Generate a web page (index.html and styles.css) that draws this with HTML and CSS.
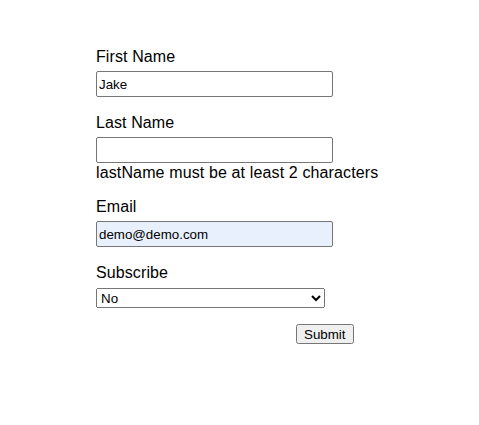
FILE: index.html
```html
<!DOCTYPE html>
<html lang="en">
<head>
    <meta charset="UTF-8">
    <meta name="viewport" content="width=device-width, initial-scale=1.0">
    <title>Signup Form</title>
    <link rel="stylesheet" href="styles.css">
</head>
<body>
    <div class="container">
        <form id="signup-form">
            <div class="form-group">
                <label for="firstName">First Name</label>
                <input type="text" id="firstName" value="Jake">
            </div>
            <div class="form-group">
                <label for="lastName">Last Name</label>
                <input type="text" id="lastName">
                <div class="error">lastName must be at least 2 characters</div>
            </div>
            <div class="form-group">
                <label for="email">Email</label>
                <input type="email" id="email" class="autofilled" value="demo@demo.com">
            </div>
            <div class="form-group">
                <label for="subscribe">Subscribe</label>
                <select id="subscribe">
                    <option value="no">No</option>
                    <option value="yes">Yes</option>
                </select>
            </div>
            <div class="actions">
                <button type="submit">Submit</button>
            </div>
        </form>
    </div>
</body>
</html>
```

FILE: styles.css
```css
body {
    font-family: "Liberation Sans", Arial, sans-serif;
    margin: 8px;
    background-color: #fff;
    color: #000;
}

.container {
    padding: 39px 0 0 88px;
}

.form-group {
    margin-bottom: 16px;
}

label {
    display: block;
    font-size: 16px;
    line-height: 17px;
    padding-top: 1px;
    letter-spacing: 0.1px;
}

input {
    display: block;
    box-sizing: border-box;
    width: 237px;
    height: 26px;
    margin-top: 6px;
    padding: 0 2px;
    font-family: "Liberation Sans", Arial, sans-serif;
    font-size: 13.333px;
    border: 1px solid #767676;
    border-radius: 2px;
    background-color: #fff;
}

input.autofilled {
    background-color: #e8f0fe;
}

select {
    display: block;
    box-sizing: border-box;
    width: 229px;
    height: 20px;
    margin-top: 7px;
    font-family: "Liberation Sans", Arial, sans-serif;
    font-size: 13.333px;
}

.error {
    font-size: 16px;
    line-height: 17px;
    padding-top: 1px;
    letter-spacing: 0.13px;
}

.actions {
    padding-left: 200px;
}

button {
    font-family: "Liberation Sans", Arial, sans-serif;
    font-size: 13.333px;
    height: 20px;
    padding: 1px 7px 1px 6px;
}
```
